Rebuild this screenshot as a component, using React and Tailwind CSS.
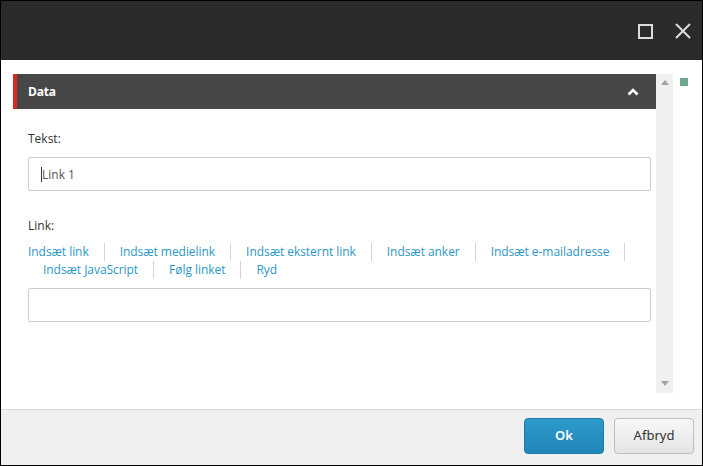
import React from 'react';

const links = [
  'Indsæt link',
  'Indsæt medielink',
  'Indsæt eksternt link',
  'Indsæt anker',
  'Indsæt e-mailadresse',
  'Indsæt JavaScript',
  'Følg linket',
  'Ryd',
];

const App = () => {
  return (
    <div className="w-[703px] h-[466px] border border-black flex flex-col bg-white font-['Open_Sans',sans-serif] overflow-hidden">
      {/* Title bar */}
      <div className="h-[59px] shrink-0 bg-[#2b2b2b] flex items-center justify-end pr-[10px] gap-[21px]">
        <div className="w-[15px] h-[15px] border-2 border-[#dcdcdc] mt-[1px]" />
        <svg width="18" height="18" viewBox="0 0 18 18" className="mt-[1px]">
          <path d="M2 2L16 16M16 2L2 16" stroke="#dcdcdc" strokeWidth="2" />
        </svg>
      </div>

      {/* Dialog body */}
      <div className="flex-1 flex pt-[14px] pl-[12px]">
        <div className="w-[643px] flex flex-col">
          {/* Section header */}
          <div className="h-[35px] bg-[#474747] border-l-4 border-[#dc291e] flex items-center justify-between pl-[11px] pr-[17px]">
            <span className="text-white text-[12px] font-bold tracking-[-0.2px]">Data</span>
            <svg width="12" height="8" viewBox="0 0 12 8">
              <path d="M1.5 6.5L6 2L10.5 6.5" stroke="#fff" strokeWidth="2.6" fill="none" />
            </svg>
          </div>

          <div className="pl-[15px] pr-[5px] pt-[21px] text-[12px] leading-[17px]">
            <div className="text-[#333]">Tekst:</div>
            <div className="mt-[10px] h-[34px] border border-[#ccc] rounded-[2px] flex items-center pl-[12px] text-[#555]">
              <span className="w-px h-[15px] bg-[#333]" />
              <span>Link 1</span>
            </div>

            <div className="mt-[26px] text-[#333]">Link:</div>
            <div className="mt-[9px] flex flex-wrap leading-[18px] tracking-[-0.05px]">
              {links.map((label, i) => (
                <span
                  key={label}
                  className={`${i === 0 ? 'pl-0' : 'pl-[15px]'} pr-[15px] border-r border-[#d4d4d4] text-[#2a97c6] whitespace-nowrap ${i === links.length - 1 ? 'border-r-0' : ''}`}
                >
                  {label}
                </span>
              ))}
            </div>
            <div className="mt-[9px] h-[34px] border border-[#ccc] rounded-[2px]" />
          </div>
        </div>

        {/* Scrollbar */}
        <div className="w-[17px] h-[319px] bg-[#f0f0f0] flex flex-col items-center justify-between pt-[6px] pb-[7px]">
          <svg width="8" height="5" viewBox="0 0 8 5">
            <path d="M0 5L4 0L8 5Z" fill="#a3a3a3" />
          </svg>
          <svg width="8" height="5" viewBox="0 0 8 5">
            <path d="M0 0L8 0L4 5Z" fill="#a3a3a3" />
          </svg>
        </div>

        <div className="ml-[7px] mt-[4px] w-[8px] h-[8px] bg-[#6ca78d]" />
      </div>

      {/* Footer */}
      <div className="h-[56px] shrink-0 bg-[#f0f0f0] border-t border-[#dadada] flex items-start justify-end gap-[10px] pt-[8px] pr-[8px] font-['Noto_Sans',sans-serif] text-[13px]">
        <button className="w-[80px] h-[36px] rounded-[4px] border border-[#1f7bab] bg-gradient-to-b from-[#2d9bcb] to-[#1f86b7] text-white font-semibold">
          Ok
        </button>
        <button className="w-[80px] h-[36px] rounded-[4px] border border-[#bdbdbd] bg-gradient-to-b from-[#f8f8f8] to-[#e4e4e4] text-[#333]">
          Afbryd
        </button>
      </div>
    </div>
  );
};

export default App;
